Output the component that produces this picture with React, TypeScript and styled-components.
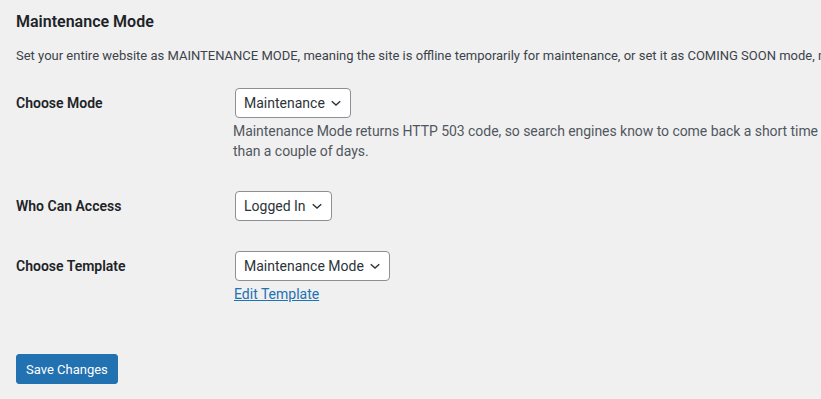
import React from "react";
import styled, { createGlobalStyle } from "styled-components";

const Global = createGlobalStyle`
  html, body { margin: 0; padding: 0; background: #f0f0f1; overflow: hidden; }
  body { font-family: Roboto, "Liberation Sans", sans-serif; color: #1d2327; }
`;

const Page = styled.div`
  padding: 11px 16px 0;
  width: 1400px;
`;

const Title = styled.h2`
  margin: 0;
  font-size: 16px;
  font-weight: 600;
  line-height: 22px;
  color: #1d2327;
`;

const Intro = styled.p`
  margin: 14px 0 0;
  font-size: 13px;
  line-height: 18px;
  color: #3c434a;
  white-space: nowrap;
`;

const Form = styled.div`
  margin-top: 23px;
  display: flex;
  flex-direction: column;
  gap: 30px;
`;

const Row = styled.div`
  display: grid;
  grid-template-columns: 217px 1fr;
  align-items: start;
`;

const Label = styled.div`
  height: 30px;
  display: flex;
  align-items: center;
  font-size: 14px;
  font-weight: 600;
  color: #1d2327;
`;

const Field = styled.div`
  display: flex;
  flex-direction: column;
  align-items: flex-start;
`;

const Select = styled.div`
  box-sizing: border-box;
  height: 30px;
  margin-left: 2px;
  display: inline-flex;
  align-items: center;
  gap: 5px;
  padding: 0 8px;
  border: 1px solid #8c8f94;
  border-radius: 4px;
  background: #fff;
  font-size: 14px;
  color: #2c3338;
`;

const Description = styled.p`
  margin: 3px 0 0;
  font-size: 14px;
  letter-spacing: -0.05px;
  line-height: 20px;
  color: #50575e;
  white-space: nowrap;
`;

const Link = styled.a`
  margin: 3px 0 0 1px;
  font-size: 14px;
  line-height: 20px;
  color: #2271b1;
  text-decoration: underline;
`;

const Button = styled.button`
  margin-top: 50px;
  box-sizing: border-box;
  height: 30px;
  padding: 0 9px;
  border: 1px solid #2271b1;
  border-radius: 3px;
  background: #2271b1;
  color: #fff;
  font-family: Roboto, "Liberation Sans", sans-serif;
  font-size: 13px;
`;

const Chevron = () => (
  <svg width="12" height="8" viewBox="0 0 12 8" fill="none">
    <path d="M1.75 2.25 L6 6 L10.25 2.25" stroke="#2c3338" strokeWidth="1.4" />
  </svg>
);

export default function App() {
  return (
    <>
      <Global />
      <Page>
        <Title>Maintenance Mode</Title>
        <Intro>
          Set your entire website as MAINTENANCE MODE, meaning the site is offline temporarily for maintenance, or set it as COMING SOON mode, meaning the site is not launched yet.
        </Intro>
        <Form>
          <Row>
            <Label>Choose Mode</Label>
            <Field>
              <Select>
                Maintenance <Chevron />
              </Select>
              <Description>
                Maintenance Mode returns HTTP 503 code, so search engines know to come back a short time later. It is not recommended to use this mode for more
                <br />
                than a couple of days.
              </Description>
            </Field>
          </Row>
          <Row>
            <Label>Who Can Access</Label>
            <Field>
              <Select>
                Logged In <Chevron />
              </Select>
            </Field>
          </Row>
          <Row>
            <Label>Choose Template</Label>
            <Field>
              <Select>
                Maintenance Mode <Chevron />
              </Select>
              <Link href="#">Edit Template</Link>
            </Field>
          </Row>
        </Form>
        <Button>Save Changes</Button>
      </Page>
    </>
  );
}
